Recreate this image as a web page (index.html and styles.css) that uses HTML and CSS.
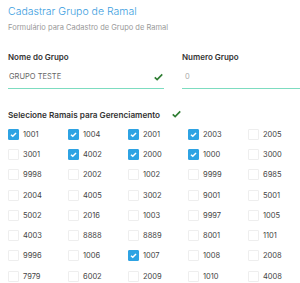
FILE: index.html
```html
<html>
<head>
<meta charset="utf-8">
<link rel="stylesheet" href="styles.css">
</head>
<body>
<div class="panel">
    <h1 class="title">Cadastrar Grupo de Ramal</h1>
    <p class="subtitle">Formulário para Cadastro de Grupo de Ramal</p>

    <div class="fields">
        <div class="field field-name">
            <label class="label">Nome do Grupo</label>
            <div class="input valid">
                <span>GRUPO TESTE</span>
                <svg class="ok" viewBox="0 0 12 10"><path d="M1 5.5 L4.2 8.5 L11 1.5" fill="none" stroke="currentColor" stroke-width="2.2"/></svg>
            </div>
        </div>
        <div class="field field-num">
            <label class="label">Numero Grupo</label>
            <div class="input"><span class="muted">0</span></div>
        </div>
    </div>

    <div class="ramais-head">
        <span class="label">Selecione Ramais para Gerenciamento</span>
        <svg class="ok" viewBox="0 0 12 10"><path d="M1 5.5 L4.2 8.5 L11 1.5" fill="none" stroke="currentColor" stroke-width="2.2"/></svg>
    </div>

    <div class="ramais" id="ramais"></div>
</div>

<script>
    var ramais = [
        ['1001', 1], ['1004', 1], ['2001', 1], ['2003', 1], ['2005', 0],
        ['3001', 0], ['4002', 1], ['2000', 1], ['1000', 1], ['3000', 0],
        ['9998', 0], ['2002', 0], ['1002', 0], ['9999', 0], ['6985', 0],
        ['2004', 0], ['4005', 0], ['3002', 0], ['9001', 0], ['5001', 0],
        ['5002', 0], ['2016', 0], ['1003', 0], ['9997', 0], ['1005', 0],
        ['4003', 0], ['8888', 0], ['8889', 0], ['8001', 0], ['1101', 0],
        ['9996', 0], ['1006', 0], ['1007', 1], ['1008', 0], ['2008', 0],
        ['7979', 0], ['6002', 0], ['2009', 0], ['1010', 0], ['4008', 0]
    ];
    var list = document.getElementById('ramais');
    var tick = '<svg viewBox="0 0 10 10"><path d="M2.2 5.2 L4.2 7 L7.8 3.2" fill="none" stroke="white" stroke-width="1.6"/></svg>';
    for (var r of ramais) {
        var item = document.createElement('label');
        item.className = 'ramal';
        item.innerHTML = '<span class="box' + (r[1] ? ' checked' : '') + '">' + (r[1] ? tick : '') + '</span>' + r[0];
        list.appendChild(item);
    }
</script>
</body>
</html>
```

FILE: styles.css
```css
html {
    background: #fff;
}

body {
    margin: 0;
    font-family: Inter, "Noto Sans", sans-serif;
    color: #444;
}

.panel {
    padding: 5px 8px 0;
}

.title {
    margin: 0;
    font-size: 10.5px;
    font-weight: 300;
    color: #3c9ee0;
    line-height: 14px;
}

.subtitle {
    margin: 3px 0 0;
    font-size: 7.5px;
    color: #9a9a9a;
    line-height: 12px;
}

.fields {
    display: flex;
    gap: 18px;
    margin-top: 17px;
}
.field-name {
    width: 156px;
}
.field-num {
    flex: 1;
    margin-right: -8px;
}

.label {
    display: block;
    font-size: 8px;
    font-weight: 600;
    color: #333;
    line-height: 12px;
}

.input {
    display: flex;
    align-items: center;
    justify-content: space-between;
    height: 23px;
    margin-top: 2px;
    padding: 0 1px;
    font-size: 7.5px;
    color: #666;
    border-bottom: 1px solid #7ddcc0;
}
.input .muted {
    color: #aaa;
    padding-left: 2px;
}

.ok {
    width: 9px;
    height: 8px;
    color: #2e7d32;
}

.ramais-head {
    display: flex;
    align-items: center;
    gap: 12px;
    margin-top: 20px;
}
.ramais-head .label {
    font-size: 8.2px;
}
.ramais-head .ok {
    margin-top: -2px;
}

.ramais {
    display: grid;
    grid-template-columns: repeat(5, 60px);
    grid-auto-rows: 20.3px;
    margin-top: 3px;
}

.ramal {
    display: flex;
    align-items: center;
    gap: 4px;
    font-size: 7.5px;
    color: #444;
}

.box {
    width: 11px;
    height: 11px;
    box-sizing: border-box;
    border: 1px solid #eee;
    border-radius: 1px;
    display: flex;
}
.box.checked {
    background: #2ea3e3;
    border-color: #2ea3e3;
}
.box svg {
    width: 100%;
    height: 100%;
}
```
